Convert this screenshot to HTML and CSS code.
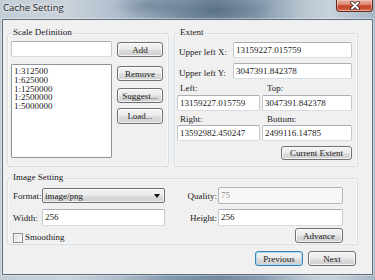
FILE: index.html
```html
<!DOCTYPE html>
<html>
<head>
<meta charset="utf-8">
<title>Cache Setting</title>
<link rel="stylesheet" href="styles.css">
</head>
<body>
<div class="window">
  <div class="titlebar">
    <span class="title">Cache Setting</span>
    <div class="close">
      <svg width="12" height="9" viewBox="0 0 12 9">
        <path d="M3 1.5 L9 7.5 M9 1.5 L3 7.5" stroke="#3a2a28" stroke-width="3.6" stroke-linecap="round" fill="none"/>
        <path d="M3 1.5 L9 7.5 M9 1.5 L3 7.5" stroke="#ffffff" stroke-width="2" stroke-linecap="round" fill="none"/>
      </svg>
    </div>
  </div>
  <div class="client">
    <div class="toprow">
      <div class="group scale">
        <span class="legend">Scale Definition</span>
        <div class="scale-body">
          <div class="scale-left">
            <div class="field"></div>
            <div class="listbox">
              <div>1:312500</div>
              <div>1:625000</div>
              <div>1:1250000</div>
              <div>1:2500000</div>
              <div>1:5000000</div>
            </div>
          </div>
          <div class="scale-buttons">
            <div class="btn b-add">Add</div>
            <div class="btn b-remove">Remove</div>
            <div class="btn b-suggest">Suggest...</div>
            <div class="btn b-load">Load...</div>
          </div>
        </div>
      </div>
      <div class="group extent">
        <span class="legend">Extent</span>
        <div class="ex-body">
          <div class="ex-row first">
            <span class="ex-label">Upper left X:</span>
            <div class="field ex-field">13159227.015759</div>
          </div>
          <div class="ex-row">
            <span class="ex-label">Upper left Y:</span>
            <div class="field ex-field">3047391.842378</div>
          </div>
          <div class="ex-pair p1">
            <div class="ex-col c1">
              <div class="lbl">Left:</div>
              <div class="field">13159227.015759</div>
            </div>
            <div class="ex-col c2">
              <div class="lbl">Top:</div>
              <div class="field">3047391.842378</div>
            </div>
          </div>
          <div class="ex-pair p2">
            <div class="ex-col c1">
              <div class="lbl">Right:</div>
              <div class="field">13592982.450247</div>
            </div>
            <div class="ex-col c2">
              <div class="lbl">Bottom:</div>
              <div class="field">2499116.14785</div>
            </div>
          </div>
          <div class="btn b-current">Current Extent</div>
        </div>
      </div>
    </div>
    <div class="group image">
      <span class="legend">Image Setting</span>
      <div class="img-body">
        <div class="img-row r1">
          <span class="l1">Format:</span>
          <div class="select c1"><span>image/png</span><i class="arrow"></i></div>
          <span class="l2">Quality:</span>
          <div class="field c2 disabled">75</div>
        </div>
        <div class="img-row r2">
          <span class="l1">Width:</span>
          <div class="field c1">256</div>
          <span class="l2">Height:</span>
          <div class="field c2">256</div>
        </div>
        <div class="img-row r3">
          <span class="check"></span>
          <span class="check-label">Smoothing</span>
          <div class="btn b-advance">Advance</div>
        </div>
      </div>
    </div>
    <div class="footer">
      <div class="btn b-nav focused">Previous</div>
      <div class="btn b-nav">Next</div>
    </div>
  </div>
</div>
</body>
</html>
```
FILE: styles.css
```css
html, body {
  margin: 0;
  padding: 0;
}
body {
  width: 375px;
  height: 280px;
  overflow: hidden;
  font-family: "Liberation Serif", "Times New Roman", serif;
  font-size: 9px;
  color: #1a1a1a;
}
.window {
  width: 375px;
  height: 280px;
  display: flex;
  flex-direction: column;
  background:
    radial-gradient(ellipse 60px 14px at 215px 10px, rgba(70, 95, 120, 0.55), rgba(70, 95, 120, 0)),
    radial-gradient(ellipse 40px 12px at 150px 6px, rgba(90, 112, 135, 0.45), rgba(90, 112, 135, 0)),
    linear-gradient(90deg, #c3cdd6 0%, #cad3db 18%, #aebccb 32%, #8399ad 45%, #74899e 58%, #8a9eb1 70%, #b6c3cf 80%, #c8d2dc 88%, #a8b7c6 100%);
}
.titlebar {
  height: 19px;
  display: flex;
  align-items: flex-start;
  flex: none;
}
.title {
  margin: 2px 0 0 3px;
  font-family: "Open Sans", "Noto Sans", sans-serif;
  font-size: 9.6px;
  line-height: 12px;
  color: #1b1b1b;
  text-shadow: 0 0 4px rgba(255, 255, 255, 0.9), 0 0 2px rgba(255, 255, 255, 0.8);
}
.close {
  margin-left: auto;
  margin-right: 2px;
  width: 37px;
  height: 12px;
  box-sizing: border-box;
  border: 1px solid #6b2a1f;
  border-top: none;
  border-radius: 0 0 4px 4px;
  background: linear-gradient(#eab0a2 0%, #dc8a76 40%, #c8472f 52%, #c7492f 75%, #de8164 100%);
  box-shadow: inset 0 0 0 1px rgba(255, 220, 210, 0.45);
  display: flex;
  align-items: center;
  justify-content: center;
}
.close svg {
  display: block;
}
.client {
  margin-left: 2px;
  width: 371px;
  height: 256px;
  box-sizing: border-box;
  border: 1px solid #5f6e7d;
  background: #f0f0f0;
  padding: 0 14px 0 4px;
  box-shadow: 0 0 0 1px rgba(255, 255, 255, 0.35);
  flex: none;
}
.toprow {
  display: flex;
  gap: 5px;
  margin-top: 13px;
}
.group {
  border: 1px solid #d5dfe5;
  border-radius: 3px;
  box-sizing: border-box;
  box-shadow: inset 0 0 0 1px rgba(255, 255, 255, 0.6);
}
.legend {
  display: block;
  width: fit-content;
  line-height: 10px;
  height: 10px;
  margin: -7px 0 0 4px;
  padding: 0 1px;
  background: #f0f0f0;
  white-space: nowrap;
}
.scale {
  width: 162px;
  height: 134px;
}
.extent {
  width: 184px;
  height: 134px;
}
.image {
  width: 351px;
  height: 67px;
  margin-top: 11px;
}
.field {
  box-sizing: border-box;
  height: 16px;
  border: 1px solid #abadb3;
  border-left-color: #c6c8cd;
  border-right-color: #c6c8cd;
  border-bottom-color: #d7dce2;
  border-radius: 2px;
  background: #ffffff;
  padding-left: 2px;
  line-height: 14px;
  white-space: nowrap;
  overflow: hidden;
}
.field.disabled {
  color: #8d8d8d;
  background: #f7f7f7;
  border-color: #b5b5b5;
}
.btn {
  box-sizing: border-box;
  display: flex;
  align-items: center;
  justify-content: center;
  border: 1px solid #707070;
  border-radius: 3px;
  background: linear-gradient(#f3f3f3 0%, #ebebeb 48%, #dddddd 52%, #cfcfcf 100%);
  box-shadow: inset 0 0 0 1px rgba(255, 255, 255, 0.75);
  height: 15px;
  line-height: 12px;
  white-space: nowrap;
  color: #1a1a1a;
}
/* scale definition */
.scale-body {
  display: flex;
  gap: 5px;
  margin: 4px 0 0 3px;
}
.scale-left {
  width: 101px;
}
.listbox {
  margin-top: 7px;
  height: 94px;
  box-sizing: border-box;
  border: 1px solid #8e9399;
  border-radius: 1px;
  background: #ffffff;
  padding: 2px 0 0 2px;
  line-height: 8.8px;
}
.scale-buttons {
  width: 46px;
  display: flex;
  flex-direction: column;
}
.b-add { margin-top: 1px; }
.b-remove { margin-top: 9px; }
.b-suggest { margin-top: 7px; }
.b-load { margin-top: 5px; height: 16px; }
/* extent */
.ex-body {
  padding: 0 5px 0 2px;
  display: flex;
  flex-direction: column;
}
.ex-row {
  display: flex;
  align-items: center;
  height: 16px;
  margin-top: 5px;
}
.ex-label {
  width: 56px;
  box-sizing: border-box;
  padding-left: 2px;
  margin-top: 3px;
  white-space: nowrap;
}
.ex-field {
  width: 119px;
}
.ex-pair {
  display: flex;
  gap: 2px;
}
.ex-pair.p1 { margin-top: 4px; }
.ex-pair.p2 { margin-top: 3px; }
.ex-col.c1 { width: 83px; }
.ex-col.c2 { width: 90px; }
.lbl {
  line-height: 10px;
  height: 10px;
  margin-bottom: 2px;
}
.p2 .lbl { margin-bottom: 1px; }
.ex-col.c1 .lbl { padding-left: 3px; }
.ex-col.c2 .lbl { padding-left: 5px; }
.b-current {
  width: 71px;
  height: 14px;
  margin-top: 5px;
  align-self: flex-end;
}
/* image settings */
.img-body {
  margin-left: 5px;
  width: 330px;
}
.img-row {
  display: flex;
  align-items: center;
  height: 17px;
}
.img-row.r1 { margin-top: 5px; }
.img-row.r2 { margin-top: 5px; }
.img-row.r3 { margin-top: 2px; height: 15px; }
.l1 {
  width: 29px;
  white-space: nowrap;
}
.c1 {
  width: 123px;
}
.l2 {
  width: 53px;
  box-sizing: border-box;
  text-align: right;
  padding-right: 1px;
  white-space: nowrap;
}
.c2 {
  width: 125px;
}
.img-row .field {
  height: 17px;
  line-height: 15px;
}
.select {
  box-sizing: border-box;
  height: 15px;
  border: 1px solid #707070;
  border-radius: 2px;
  background: linear-gradient(#f3f3f3 0%, #ebebeb 48%, #dddddd 52%, #cfcfcf 100%);
  box-shadow: inset 0 0 0 1px rgba(255, 255, 255, 0.7);
  display: flex;
  align-items: center;
  padding: 0 4px 0 2px;
  line-height: 12px;
}
.select span {
  flex: 1;
}
.arrow {
  width: 0;
  height: 0;
  border-left: 3.5px solid transparent;
  border-right: 3.5px solid transparent;
  border-top: 4px solid #111111;
}
.check {
  width: 10px;
  height: 10px;
  box-sizing: border-box;
  border: 1px solid #8e8f8f;
  background: linear-gradient(135deg, #dcdcdc, #fbfbfb);
  box-shadow: inset 0 0 0 1px #f4f4f4;
  align-self: flex-end;
}
.check-label {
  margin-left: 2px;
  align-self: flex-end;
  line-height: 10px;
  margin-bottom: 1px;
}
.b-advance {
  margin-left: auto;
  width: 48px;
  height: 15px;
}
/* footer */
.footer {
  display: flex;
  justify-content: flex-end;
  gap: 5px;
  margin-top: 6px;
  padding-right: 2px;
}
.b-nav {
  width: 48px;
  height: 15px;
}
.btn.focused {
  border-color: #3c7fb1;
  background: linear-gradient(#f3f3f3 0%, #ebebeb 48%, #dddddd 52%, #cfcfcf 100%);
  box-shadow: inset 0 0 0 1px #a8dcf6;
}
```
